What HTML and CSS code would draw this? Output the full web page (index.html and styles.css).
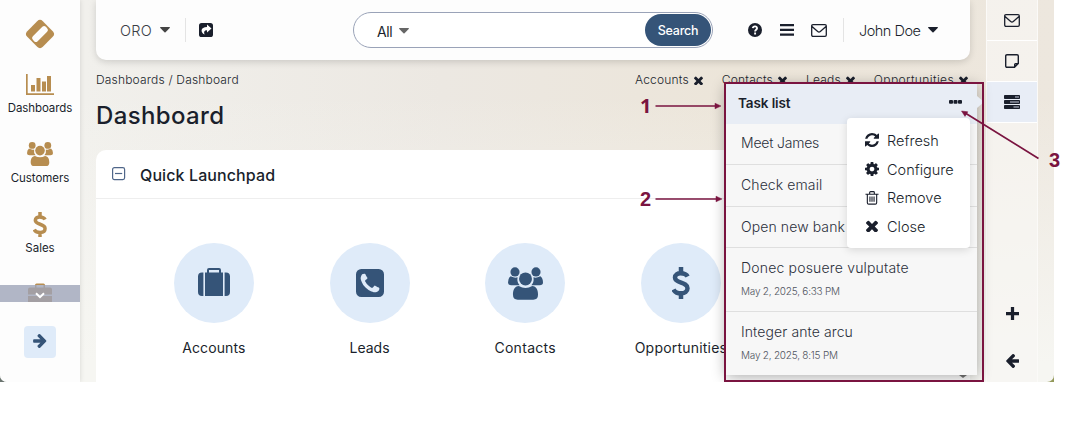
FILE: index.html
```html
<!DOCTYPE html>
<html lang="en">
<head>
<meta charset="utf-8">
<title>Dashboard</title>
<link rel="stylesheet" href="styles.css">
</head>
<body>
<svg class="defs" width="0" height="0">
  <symbol id="caret" viewBox="0 0 10 6"><path d="M.6 0h8.8q.9.3.3 1L5.500 5.300q-.5.5-1 0L.3 1Q-.3.300.6 0z"/></symbol>
  <symbol id="times" viewBox="300 402 1192 1192"><path transform="translate(0 100)" d="M1490 1322q0 40-28 68l-136 136q-28 28-68 28t-68-28l-294-294-294 294q-28 28-68 28t-68-28l-136-136q-28-28-28-68t28-68l294-294-294-294q-28-28-28-68t28-68l136-136q28-28 68-28t68 28l294 294 294-294q28-28 68-28t68 28l136 136q28 28 28 68t-28 68l-294 294 294 294q28 28 28 68z"/></symbol>
  <symbol id="users" viewBox="0 0 26 24">
    <circle cx="5.200" cy="3.400" r="3.400"/><circle cx="20.800" cy="3.400" r="3.400"/><circle cx="13" cy="8.600" r="4.800"/>
    <path d="M2 6.600q3 1.600 5.100.8-.6 3.600 1.500 5.900H2.500Q0 13.300 0 11.300 0 8 2 6.600zM24 6.600q-3 1.600-5.100.8.6 3.600-1.500 5.900h6.100Q26 13.300 26 11.300 26 8 24 6.600z"/>
    <path d="M8 13.900q5 2.800 10 0c3.200.2 4.300 3.200 4.300 6.500q0 3.600-3.500 3.600H7.200q-3.500 0-3.500-3.600c0-3.300 1.100-6.300 4.300-6.500z"/>
  </symbol>
  <symbol id="dollar" viewBox="0 0 18 32"><path d="M9 0v5.500M9 26.500V32M15.600 9.600C13.600 5.600 3 4.500 3 10.600c0 6.200 12.500 4 12.500 10.600 0 7-11.500 6.200-14 1.300" fill="none" stroke="currentColor" stroke-width="4.500"/></symbol>
  <symbol id="mail" viewBox="0 0 16 13"><path d="M2 .7h12q1.300 0 1.300 1.300v9q0 1.300-1.300 1.300H2Q.7 12.300.7 11V2Q.7.700 2 .7zM1 2.500l5.700 5q1.300 1 2.600 0l5.700-5" fill="none" stroke="currentColor" stroke-width="1.300"/></symbol>
  <symbol id="arrow" viewBox="192 180 1408 1560"><path d="M1600 960q0 54-37 91l-651 651q-39 37-91 37-51 0-90-37l-75-75q-38-38-38-91t38-91l293-293h-704q-52 0-84.500-37.500t-32.500-90.500v-128q0-53 32.500-90.500t84.500-37.500h704l-293-294q-38-36-38-90t38-90l75-75q38-38 90-38 53 0 91 38l651 651q37 35 37 90z"/></symbol>
</svg>

<div class="backdrop"></div>
<div class="app">
  <nav class="sidebar">
    <svg class="logo" viewBox="0 0 30 30"><rect x="4" y="4" width="22" height="22" rx="4" transform="rotate(45 15 15)"/><rect class="logo-slot" x="5.800" y="11.600" width="18.400" height="6.800" rx="2.500" transform="rotate(-45 15 15)"/></svg>
    <a class="nav-item">
      <svg class="nav-chart" viewBox="0 0 28 22"><path d="M0 0h1.700v19.300H28V21H0zM5 11h4v6.500H5zM10.500 4h4v13.500h-4zM16 7.500h4v10h-4zM21 2h4v15.500h-4z"/></svg>
      <span class="dash-label">Dashboards</span>
    </a>
    <a class="nav-item"><svg class="nav-users"><use href="#users"/></svg><span class="cust-label">Customers</span></a>
    <a class="nav-item"><svg class="nav-dollar"><use href="#dollar"/></svg><span class="sales-label">Sales</span></a>
    <div class="more">
      <svg class="nav-case" viewBox="0 0 24 20"><path d="M2 4.500h20q2 0 2 2V11.500H0V6.500q0-2 2-2zM0 13h24v7H0zM7 4.500V2q0-1.500 1.500-1.500h7Q17 .5 17 2v2.500h-1.500V2h-7v2.500z"/></svg>
      <div class="more-bar"><svg viewBox="0 0 10 7"><path d="M1 1.200l4 4 4-4" fill="none" stroke="currentColor" stroke-width="2"/></svg></div>
    </div>
    <button class="expand"><svg><use href="#arrow"/></svg></button>
  </nav>

  <main class="main">
    <header class="topbar">
      <span class="org">ORO</span>
      <svg class="caret org-caret"><use href="#caret"/></svg>
      <i class="divider"></i>
      <svg class="share" viewBox="0 0 14 14"><rect width="14" height="14" rx="2.600"/><path fill="#fff" d="M8 1.600l4.500 4-4.500 4V7.300C5.300 7.200 4.500 8.800 5.600 11.600 1.200 9 1.300 4 8 3.900z"/></svg>
      <div class="search">
        <span class="all">All</span>
        <svg class="caret all-caret"><use href="#caret"/></svg>
        <span class="search-input"></span>
        <button class="search-btn">Search</button>
      </div>
      <svg class="help" viewBox="0 0 14 14"><circle cx="7" cy="7" r="7"/><path d="M4.800 5.200C5.200 2.600 9.200 2.900 9 5.300 8.900 6.700 7.100 6.700 7.100 8.500M7.100 9.500v2" fill="none" stroke="#fff" stroke-width="1.900"/></svg>
      <svg class="bars" viewBox="0 0 14 12"><path d="M0 0h14v2.300H0zM0 4.800h14v2.300H0zM0 9.500h14v2.300H0z"/></svg>
      <svg class="mail"><use href="#mail"/></svg>
      <i class="divider user-divider"></i>
      <span class="user">John Doe</span>
      <svg class="caret user-caret"><use href="#caret"/></svg>
    </header>

    <div class="crumbs">
      <span class="crumb-text">Dashboards / Dashboard</span>
      <div class="pins">
        <span class="pin pin-a">Accounts</span><svg><use href="#times"/></svg>
        <span class="pin pin-c">Contacts</span><svg><use href="#times"/></svg>
        <span class="pin pin-l">Leads</span><svg><use href="#times"/></svg>
        <span class="pin pin-o">Opportunities</span><svg><use href="#times"/></svg>
      </div>
    </div>
    <h1>Dashboard</h1>

    <section class="panel">
      <div class="panel-head">
        <svg viewBox="0 0 14 14"><rect x=".6" y=".6" width="12" height="12" rx="1.800"/><path d="M3 6.500h7.200"/></svg>
        <h2>Quick Launchpad</h2>
      </div>
      <div class="tiles">
        <div class="tile">
          <div class="disc"><svg class="t-case" viewBox="0 0 32 28"><path d="M7 4.500h18V28H7zM5.400 4.500V28H4q-4 0-4-4V8.500q0-4 4-4zM26.600 4.500V28H28q4 0 4-4V8.500q0-4-4-4zM9 4.500V2q0-2 2-2h10q2 0 2 2v2.500h-2V2H11v2.500z"/></svg></div>
          <span class="t-acc">Accounts</span>
        </div>
        <div class="tile">
          <div class="disc"><svg class="t-phone" viewBox="128 128 1536 1536"><path d="M1408 1193q0-11-2-16t-18-16.500-40.500-25-47.500-26.500-45.500-25-28.500-15q-5-3-19-13t-25-15-21-5q-15 0-36.500 20.500t-39.500 45-38.500 45-33.500 20.500q-7 0-16.500-3.500t-15.500-6.500-17-9.500-14-8.500q-99-55-170-126.500t-127-170.500q-2-3-8.500-14t-9.500-17-6.500-15.500-3.500-16.500q0-13 20.500-33.500t45-38.500 45-39.500 20.500-36.500q0-10-5-21t-15-25-13-19q-3-6-15-28.500t-25-45.500-26.500-47.500-25-40.500-16.500-18-16-2q-48 0-101 22-46 21-80 94.500t-34 130.500q0 16 2.500 34t5 30.500 9 33 10 29.500 12.500 33 11 30q60 164 216.500 320.500t320.500 216.500q6 2 30 11t33 12.500 29.500 10 33 9 30.500 5 34 2.500q57 0 130.500-34t94.500-80q22-53 22-101zm256-777v960q0 119-84.500 203.500t-203.500 84.500h-960q-119 0-203.500-84.500t-84.500-203.500v-960q0-119 84.500-203.500t203.500-84.500h960q119 0 203.500 84.500t84.500 203.500z"/></svg></div>
          <span class="t-lead">Leads</span>
        </div>
        <div class="tile"><div class="disc"><svg class="t-users"><use href="#users"/></svg></div><span class="t-con">Contacts</span></div>
        <div class="tile"><div class="disc"><svg class="t-dollar"><use href="#dollar"/></svg></div><span class="t-opp">Opportunities</span></div>
      </div>
    </section>
  </main>

  <aside class="rail">
    <div class="rail-item"><svg class="mail"><use href="#mail"/></svg></div>
    <div class="rail-item"><svg class="note" viewBox="0 0 14 14"><path d="M2 .7h10q1.300 0 1.300 1.300v7.500l-3.800 3.800H2Q.7 13.300.7 12V2Q.7.700 2 .7zM13.300 9.700H10.500q-.8 0-.8.8v2.800" fill="none" stroke="currentColor" stroke-width="1.400"/></svg></div>
    <div class="rail-item active"><svg class="tasks" viewBox="0 0 16 14"><rect width="16" height="4" rx=".8"/><rect y="5" width="16" height="4" rx=".8"/><rect y="10" width="16" height="4" rx=".8"/><path d="M11 1.400h4v1.200h-4zM6 6.400h9v1.200H6zM9.500 11.400H15v1.200H9.500z" fill="#c3cad9"/></svg></div>
    <div class="rail-foot">
      <svg class="plus" viewBox="0 0 12 12"><path d="M4.500 0h3v4.500H12v3H7.500V12h-3V7.500H0v-3h4.500z"/></svg>
      <svg class="back"><use href="#arrow"/></svg>
    </div>
  </aside>

  <section class="tasklist">
    <header class="task-head"><b>Task list</b><svg viewBox="0 0 13 4"><path d="M1 0h2q1 0 1 1v2q0 .8-1 .8H1Q0 3.800 0 3V1q0-1 1-1zM5.500 0h2q1 0 1 1v2q0 .8-1 .8h-2q-1 0-1-.8V1q0-1 1-1zM10 0h2q1 0 1 1v2q0 .8-1 .8h-2q-1 0-1-.8V1q0-1 1-1z"/></svg></header>
    <div class="task row1"><span class="k-meet">Meet James</span></div>
    <div class="task row2"><span class="k-check">Check email</span></div>
    <div class="task row3"><span class="k-open">Open new bank</span></div>
    <div class="task row4"><span class="k-donec">Donec posuere vulputate</span><small>May 2, 2025, 6:33 PM</small></div>
    <div class="task row5"><span class="k-int">Integer ante arcu</span><small>May 2, 2025, 8:15 PM</small></div>
    <ul class="menu">
      <li><svg viewBox="128 128 1536 1536"><path d="M1639 1056q0 5-1 7-64 268-268 434.500t-478 166.500q-146 0-282.500-55t-243.500-157l-129 129q-19 19-45 19t-45-19-19-45v-448q0-26 19-45t45-19h448q26 0 45 19t19 45-19 45l-137 137q71 66 161 102t187 36q134 0 250-65t186-179q11-17 53-117 8-23 30-23h192q13 0 22.500 9.500t9.500 22.500zm25-800v448q0 26-19 45t-45 19h-448q-26 0-45-19t-19-45 19-45l138-138q-148-137-349-137-134 0-250 65t-186 179q-11 17-53 117-8 23-30 23h-199q-13 0-22.500-9.500t-9.500-22.500v-7q65-268 270-434.500t480-166.500q146 0 284 55.500t245 156.500l130-129q19-19 45-19t45 19 19 45z"/></svg><span class="m-ref">Refresh</span></li>
      <li><svg viewBox="128 128 1536 1536"><path d="M1152 896q0-106-75-181t-181-75-181 75-75 181 75 181 181 75 181-75 75-181zm512-109v222q0 12-8 23t-20 13l-185 28q-19 54-39 91 35 50 107 138 10 12 10 25t-9 23q-27 37-99 108t-94 71q-12 0-26-9l-138-108q-44 23-91 38-16 136-29 186-7 28-36 28h-222q-14 0-24.500-8.500t-11.500-21.500l-28-184q-49-16-90-37l-141 107q-10 9-25 9-14 0-25-11-126-114-165-168-7-10-7-23 0-12 8-23 15-21 51-66.500t54-70.500q-27-50-41-99l-183-27q-13-2-21-12.500t-8-23.500v-222q0-12 8-23t19-13l186-28q14-46 39-92-40-57-107-138-10-12-10-24 0-10 9-23 26-36 98.500-107.500t94.500-71.500q13 0 26 10l138 107q44-23 91-38 16-136 29-186 7-28 36-28h222q14 0 24.500 8.500t11.500 21.500l28 184q49 16 90 37l142-107q9-9 24-9 13 0 25 10 129 119 165 170 7 8 7 22 0 12-8 23-15 21-51 66.500t-54 70.500q26 50 41 98l183 28q13 2 21 12.500t8 23.500z"/></svg><span class="m-conf">Configure</span></li>
      <li><svg viewBox="0 0 14 15"><path d="M0 3.500h14M4.500 3.500V1.700Q4.500.700 5.500.7h3q1 0 1 1v1.800M2 3.500V12.500q0 1.500 1.500 1.500h7q1.500 0 1.500-1.500v-9M4.800 6v5.500M7 6v5.500M9.200 6v5.500" fill="none" stroke="currentColor" stroke-width="1.200"/></svg><span class="m-rem">Remove</span></li>
      <li><svg class="m-x"><use href="#times"/></svg><span class="m-close">Close</span></li>
    </ul>
  </section>
  <i class="pointer"></i>
  <i class="scroll-arrow"></i>
</div>

<svg class="callouts" width="1078" height="426">
  <rect x="725" y="83" width="258" height="298"/>
  <path d="M655.500 106H716M655.500 199H717M1038.500 158.500L966 113.500"/>
  <path class="tip" d="M721 106l-6-2.800v5.600zM722 199l-6-2.800v5.600zM961.500 111l6.300.8-2.800 4.600z"/>
</svg>
<b class="num n1">1</b><b class="num n2">2</b><b class="num n3">3</b>
</body>
</html>
```
FILE: styles.css
```css
body { margin: 0; width: 1078px; height: 426px; background: #fff; color: #1a1f2c; font-family: Inter, "Liberation Sans", sans-serif; position: relative; overflow: hidden; }
svg { display: block; fill: currentColor; flex: none; }
span, b, small, h1, h2 { white-space: nowrap; }
h1, h2, ul { margin: 0; padding: 0; font-weight: 500; }
button { border: 0; padding: 0; font-family: inherit; }
.defs { position: absolute; }

/* Desktop visible behind the rounded window corners */
.backdrop { position: absolute; left: 0; top: 370px; width: 1054px; height: 12px; background: linear-gradient(90deg, #6b7570 50%, #93995a 50%); }
.app { position: relative; width: 1054px; height: 382px; display: flex; overflow: hidden; border-radius: 0 0 7px 7px; background: linear-gradient(180deg, #f6f6f200 25%, #f6f6f2 95%), linear-gradient(90deg, #f1f0ec 8%, #ece8e2 42%, #ece5d9 70%, #ede7de 100%); }

/* Left navigation */
.sidebar { width: 80px; flex: none; display: flex; flex-direction: column; align-items: center; background: #fdfdfd; box-shadow: 0 0 5px #0002; z-index: 2; color: #b78d50; }
.logo { width: 30px; height: 30px; margin-top: 19px; }
.logo-slot { fill: #fdfdfd; }
.nav-item { height: 70px; display: flex; flex-direction: column; align-items: center; font-size: 11.500px; }
.nav-item span { color: #1a1f2c; line-height: 16px; margin-top: auto; }
.nav-item .dash-label { letter-spacing: -.1px; }
.nav-item .cust-label { letter-spacing: -.05px; }
.nav-item:nth-of-type(1) { height: 67px; }
.nav-chart { width: 28px; height: 22px; margin-top: 25px; }
.nav-users { width: 26px; height: 24px; margin-top: 26px; }
.nav-dollar { width: 14px; height: 25px; margin-top: 26px; }
.more { margin-top: 27px; width: 80px; height: 19px; position: relative; overflow: hidden; }
.nav-case { width: 24px; height: 20px; margin: 0 auto; }
.more-bar { position: absolute; inset: 2px 0 0; background: #9da4b8cc; color: #fff; display: flex; justify-content: center; align-items: center; }
.more-bar svg { width: 10px; height: 7px; margin-top: 3px; }
.expand { width: 32px; height: 32px; margin-top: 24px; border-radius: 4px; background: #dfebf9; color: #355478; display: grid; place-items: center; }
.expand svg { width: 14px; height: 14px; margin-top: -2px; }

/* Main column */
.main { flex: 1; padding: 0 16px; min-width: 0; display: flex; flex-direction: column; }
.topbar { height: 60px; box-sizing: border-box; background: #fdfdfd; border-radius: 0 0 10px 10px; box-shadow: 0 2px 7px #00000026; display: flex; align-items: center; padding-left: 24px; flex: none; font-size: 14px; }
.org { color: #3a3d45; letter-spacing: .3px; width: 34px; font-weight: 300; font-size: 14.500px; }
.caret { width: 10px; height: 6px; }
.org-caret { margin-left: 6px; color: #444; }
.divider { width: 1px; height: 24px; background: #e4e4e4; margin-left: 15px; }
.share { width: 14px; height: 14px; margin-left: 13px; margin-top: -1px; }
.search { width: 360px; height: 36px; box-sizing: border-box; border: 1px solid #9aa3b8; border-radius: 18px; margin-left: 140px; display: flex; align-items: center; padding: 0 1px 0 23px; background: #fff; }
.all { width: 17px; letter-spacing: -.4px; padding-top: 3px; }
.all-caret { margin-left: 5px; color: #666; margin-top: 2px; }
.search-input { flex: 1; }
.search-btn { width: 66px; height: 32px; border-radius: 16px; background: #355478; color: #fff; font-size: 12.500px; font-weight: 500; letter-spacing: -.25px; }
.help { width: 14px; height: 14px; margin-left: 35px; margin-top: -1px; }
.bars { width: 14px; height: 12px; margin-left: 18px; }
.mail { width: 16px; height: 13px; }
.topbar .mail { margin-left: 17px; margin-top: 1px; }
.user-divider { margin-left: 16px; }
.user { margin-left: 15px; width: 61px; font-weight: 300; font-size: 14.500px; letter-spacing: -.5px; }
.user-caret { margin-left: 8px; }
.crumbs { margin-top: 12px; height: 16px; display: flex; justify-content: space-between; line-height: 16px; font-size: 12px; font-weight: 300; flex: none; }
.crumb-text { letter-spacing: .18px; }
.pins { display: flex; align-items: center; margin-right: 2px; }
.pins svg { width: 9px; height: 9px; }
.pin { margin-right: 5px; letter-spacing: .2px; }
.pin-o { letter-spacing: .38px; }
.pins svg + .pin { margin-left: 19px; }
h1 { margin-top: 11px; font-size: 24px; line-height: 32px; letter-spacing: .35px; padding-top: 1px; margin-bottom: -1px; flex: none; }
.panel { margin-top: 19px; flex: 1; background: #fff; border-radius: 10px 10px 0 0; }
.panel-head { height: 48px; border-bottom: 1px solid #eee; display: flex; align-items: center; padding-left: 16px; }
.panel-head svg { width: 14px; height: 14px; fill: none; stroke: #4f6689; stroke-width: 1.200; }
h2 { margin-left: 14px; font-size: 16px; padding-top: 1px; letter-spacing: .1px; }
.tiles { display: flex; padding: 44px 0 0 40px; }
.tile { width: 155.700px; display: flex; flex-direction: column; align-items: center; font-size: 14px; flex: none; }
.tile span { margin-top: 15px; line-height: 20px; }
.t-acc { letter-spacing: .1px; }
.t-con { letter-spacing: .3px; }
.t-opp { letter-spacing: .2px; }
.disc { width: 80px; height: 80px; border-radius: 50%; background: #dfebf9; color: #355478; display: grid; place-items: center; }
.t-case { width: 32px; height: 28px; margin-top: -2px; }
.t-phone { width: 28px; height: 28px; }
.t-users { width: 35px; height: 33px; }
.t-dollar { width: 18px; height: 32px; }

/* Right rail */
.rail { width: 50px; flex: none; margin-right: 16px; background: #f8f7f3b0; border: solid #fbfaf8; border-width: 0 1px; display: flex; flex-direction: column; align-items: center; }
.rail-item { width: 50px; height: 40px; border-bottom: 1px solid #fff; display: grid; place-items: center; }
.active { background: #e8edf6; }
.note { width: 14px; height: 14px; }
.tasks { width: 16px; height: 14px; }
.rail-foot { margin-top: auto; display: flex; flex-direction: column; gap: 34px; padding-bottom: 14px; align-items: center; }
.plus { width: 13px; height: 13px; }
.back { width: 13px; height: 14px; transform: scaleX(-1); }

/* Task list popup */
.tasklist { position: absolute; left: 726px; top: 84px; width: 251px; height: 291px; background: #f7f7f7; box-shadow: 0 2px 14px #0005; z-index: 3; display: flex; flex-direction: column; }
.task-head { height: 40px; background: #e8edf5; display: flex; align-items: center; justify-content: space-between; padding: 0 15px 2px 12px; box-sizing: border-box; font-size: 13.500px; }
.task-head b { font-weight: 600; letter-spacing: -.1px; }
.task-head svg { width: 13px; height: 4px; margin-top: -2px; }
.task { border-bottom: 1px solid #dfdfdf; box-sizing: border-box; padding: 9px 15px 0; font-size: 14px; line-height: 20px; font-weight: 300; color: #2b303b; display: flex; flex-direction: column; align-items: flex-start; }
.row1 { height: 41px; }
.row2, .row3 { height: 42px; padding-top: 10px; }
.row3 { height: 41px; }
.row4 { height: 64px; padding-top: 10px; }
.row5 { height: 63px; border: 0; padding-top: 10px; }
.k-meet { letter-spacing: -.2px; }
.k-check, .k-open { letter-spacing: .1px; }
.k-donec { letter-spacing: .18px; }
.k-int { letter-spacing: .1px; }
.task small { font-size: 10px; line-height: 14px; margin-top: 6px; color: #50545e; letter-spacing: -.22px; }
.menu { position: absolute; left: 121px; top: 34px; width: 123px; height: 130px; box-sizing: border-box; background: #fff; border-radius: 4px; box-shadow: 0 2px 8px #0002; padding: 8px 18px; list-style: none; }
.menu li { height: 28.700px; display: flex; align-items: center; font-size: 14.500px; font-weight: 300; gap: 8px; letter-spacing: 0; }
.menu svg { width: 14px; height: 14px; }
.menu .m-x { width: 12px; height: 12px; margin: 0 1px; }
.pointer { position: absolute; left: 977px; top: 96px; border: solid transparent; border-width: 6px 0 6px 7px; border-left-color: #e8edf5; z-index: 3; }
.scroll-arrow { position: absolute; left: 959px; top: 375px; border: 4px solid transparent; border-top: 3px solid #777; border-bottom: 0; }

/* Numbered callouts */
.callouts { position: absolute; left: 0; top: 0; fill: none; stroke: #7a1440; stroke-width: 2; z-index: 4; }
.callouts path { stroke-width: 1.700; }
.callouts .tip { fill: #7a1440; stroke-width: .5; }
.num { position: absolute; z-index: 5; color: #7a1440; font: bold 20px/22px "Liberation Sans", sans-serif; }
.n1 { left: 640px; top: 95px; font-family: "Open Sans", sans-serif; }
.n2 { left: 640px; top: 188px; }
.n3 { left: 1049px; top: 149px; }
```
